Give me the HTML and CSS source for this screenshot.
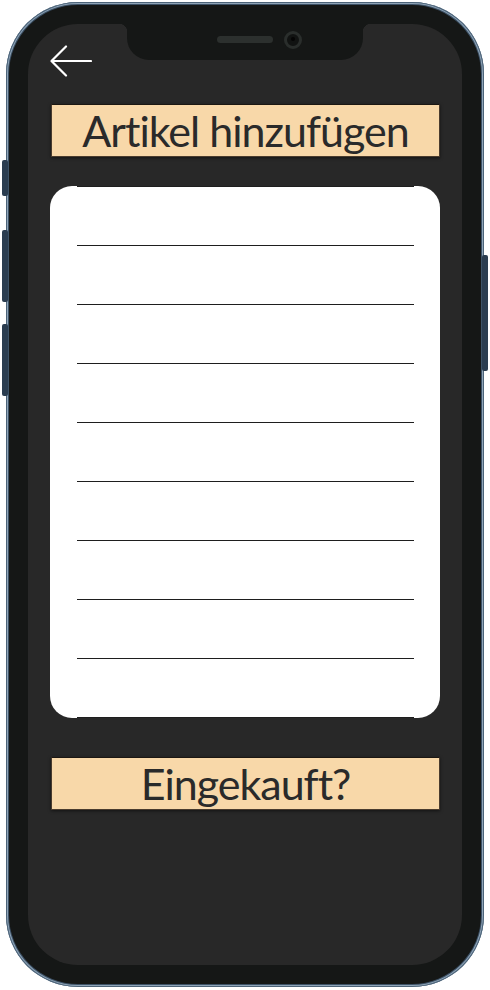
FILE: index.html
```html
<!DOCTYPE html>
<html lang="de">
<head>
<meta charset="utf-8">
<title>Artikel hinzufügen</title>
<link rel="stylesheet" href="styles.css">
</head>
<body>
<div class="phone">
  <span class="side-btn btn-l1"></span>
  <span class="side-btn btn-l2"></span>
  <span class="side-btn btn-l3"></span>
  <span class="side-btn btn-r1"></span>
  <div class="bezel">
    <div class="screen">
      <div class="notch">
        <span class="speaker"></span>
        <span class="camera"></span>
      </div>
      <button class="back" aria-label="Zurück">
        <svg width="42" height="32" viewBox="0 0 42 32">
          <path d="M41 16 H2 M16 1.5 L1.5 16 L16 30.5" fill="none" stroke="#ffffff" stroke-width="2.2" stroke-linecap="round" stroke-linejoin="round"/>
        </svg>
      </button>
      <div class="label-btn title">Artikel hinzufügen</div>
      <div class="card">
        <div class="row"></div>
        <div class="row"></div>
        <div class="row"></div>
        <div class="row"></div>
        <div class="row"></div>
        <div class="row"></div>
        <div class="row"></div>
        <div class="row"></div>
        <div class="row"></div>
        <div class="row last"></div>
      </div>
      <div class="label-btn done">Eingekauft?</div>
    </div>
  </div>
</div>
</body>
</html>
```
FILE: styles.css
```css
html, body {
  margin: 0;
  padding: 0;
  background: #ffffff;
}
body {
  width: 490px;
  height: 990px;
  overflow: hidden;
  font-family: "Lato", "Noto Sans", sans-serif;
}
.phone {
  position: relative;
  margin: 2px 0 0 6px;
  width: 478px;
  height: 985px;
  box-sizing: border-box;
  border-radius: 72px;
  padding: 3px;
  background: #3d5267;
  box-shadow: inset 0 0 0 1px #4c6378, inset 0 0 0 2px #8fa4b7;
}
.side-btn {
  position: absolute;
  width: 6px;
  background: #2b3d50;
  border-radius: 2px;
}
.btn-l1 { left: -4px; top: 158px; height: 36px; }
.btn-l2 { left: -4px; top: 228px; height: 72px; }
.btn-l3 { left: -4px; top: 322px; height: 72px; }
.btn-r1 { right: -4px; top: 253px; height: 116px; }
.bezel {
  width: 100%;
  height: 100%;
  box-sizing: border-box;
  border-radius: 69px;
  background: #151716;
  padding: 19px;
}
.screen {
  position: relative;
  width: 100%;
  height: 100%;
  box-sizing: border-box;
  border-radius: 50px;
  background: #282828;
  padding: 21px 0 0 22px;
  display: flex;
  flex-direction: column;
  align-items: flex-start;
}
.notch {
  position: absolute;
  left: 99px;
  top: 0;
  width: 236px;
  height: 36px;
  background: #151716;
  border-radius: 0 0 22px 22px;
}
.notch::before,
.notch::after {
  content: "";
  position: absolute;
  top: 0;
  width: 8px;
  height: 8px;
}
.notch::before {
  left: -8px;
  background: radial-gradient(circle at 0 100%, transparent 8px, #151716 8.5px);
}
.notch::after {
  right: -8px;
  background: radial-gradient(circle at 100% 100%, transparent 8px, #151716 8.5px);
}
.speaker {
  position: absolute;
  left: 90px;
  top: 12px;
  width: 56px;
  height: 7px;
  border-radius: 4px;
  background: #2c302e;
}
.camera {
  position: absolute;
  left: 157px;
  top: 7px;
  width: 18px;
  height: 18px;
  box-sizing: border-box;
  border-radius: 50%;
  border: 3px solid #2a2e2c;
  background: #111312;
}
.camera::after {
  content: "";
  position: absolute;
  left: 4px;
  top: 3px;
  width: 4px;
  height: 4px;
  border-radius: 50%;
  background: #050505;
}
.back {
  display: block;
  width: 42px;
  height: 32px;
  padding: 0;
  margin: 0;
  border: 0;
  background: none;
}
.back svg { display: block; }
.label-btn {
  width: 389px;
  height: 53px;
  box-sizing: border-box;
  background: #f8d8a9;
  border: 1px solid #4a3c2e;
  border-top-color: #1c1712;
  box-shadow: 0 1px 3px rgba(0, 0, 0, 0.55);
  color: #2a2a2a;
  font-size: 43px;
  line-height: 51px;
  text-align: center;
  letter-spacing: -1px;
  white-space: nowrap;
}
.title {
  margin: 27px 0 0 1px;
}
.card {
  margin-top: 29px;
  width: 390px;
  height: 532px;
  box-sizing: border-box;
  background: #ffffff;
  border-radius: 22px;
  padding: 0 26px 0 27px;
  display: flex;
  flex-direction: column;
}
.row {
  flex: 0 0 59px;
  box-sizing: border-box;
  border-top: 1px solid #1e1e1e;
}
.row.last {
  flex: 0 0 1px;
}
.done {
  margin: 39px 0 0 1px;
}
```
